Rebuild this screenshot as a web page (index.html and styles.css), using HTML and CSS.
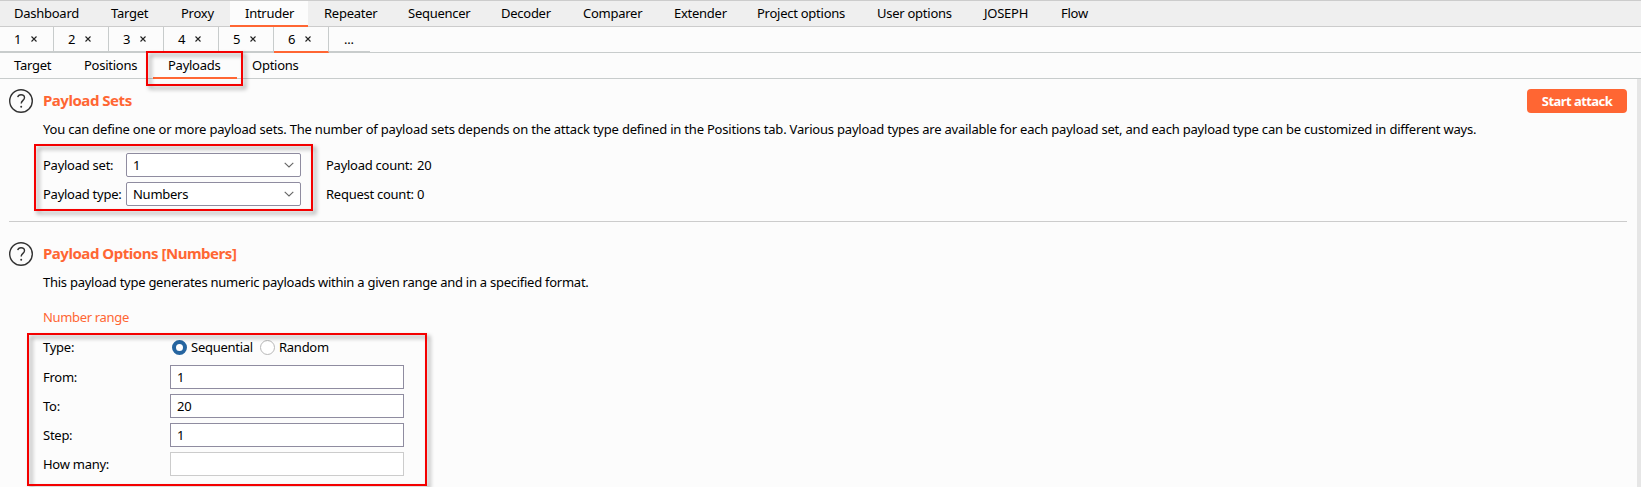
FILE: index.html
```html
<!DOCTYPE html>
<html lang="en">
<head>
<meta charset="utf-8">
<title>Intruder</title>
<link rel="stylesheet" href="styles.css">
</head>
<body>
<nav class="main-tabs">
<span class="t-dash">Dashboard</span><span>Target</span><span>Proxy</span><span class="active">Intruder</span><span>Repeater</span><span>Sequencer</span><span>Decoder</span><span>Comparer</span><span>Extender</span><span>Project options</span><span>User options</span><span>JOSEPH</span><span>Flow</span>
</nav>
<nav class="num-tabs">
<span>1<svg class="x" viewBox="0 0 6 6"><path d="M.5 .5l5 5M5.5 .5l-5 5"/></svg></span>
<span>2<svg class="x" viewBox="0 0 6 6"><path d="M.5 .5l5 5M5.5 .5l-5 5"/></svg></span>
<span>3<svg class="x" viewBox="0 0 6 6"><path d="M.5 .5l5 5M5.5 .5l-5 5"/></svg></span>
<span>4<svg class="x" viewBox="0 0 6 6"><path d="M.5 .5l5 5M5.5 .5l-5 5"/></svg></span>
<span>5<svg class="x" viewBox="0 0 6 6"><path d="M.5 .5l5 5M5.5 .5l-5 5"/></svg></span>
<span class="active">6<svg class="x" viewBox="0 0 6 6"><path d="M.5 .5l5 5M5.5 .5l-5 5"/></svg></span>
<span class="more">...</span>
</nav>
<nav class="sub-tabs"><span>Target</span><span>Positions</span><span class="active">Payloads</span><span>Options</span></nav>
<main class="panel">
<div class="content">
<section class="sets">
<header class="head">
<svg class="help" viewBox="0 0 24 24"><circle cx="12" cy="12" r="11.3"/><path class="hook" d="M8.7 8.2C9.1 6.6 10.4 5.8 12 5.8C14 5.8 15.5 6.9 15.5 8.7C15.5 11.3 12.2 11.5 12.2 14.6"/><circle class="dot" cx="12.2" cy="17.8" r="1"/></svg>
<h2>Payload Sets</h2>
<button class="attack">Start attack</button>
</header>
<p class="desc long">You can define one or more payload sets. The number of payload sets depends on the attack type defined in the Positions tab. Various payload types are available for each payload set, and each payload type can be customized in different ways.</p>
<div class="set-grid">
<span>Payload set:</span><div class="select"><span>1</span><svg viewBox="0 0 10 6"><path d="M.7 .8L5 5L9.3 .8"/></svg></div><span class="count">Payload count:</span><span>20</span>
<span>Payload type:</span><div class="select"><span>Numbers</span><svg viewBox="0 0 10 6"><path d="M.7 .8L5 5L9.3 .8"/></svg></div><span class="count">Request count:</span><span>0</span>
</div>
</section>
<section class="options">
<header class="head">
<svg class="help" viewBox="0 0 24 24"><circle cx="12" cy="12" r="11.3"/><path class="hook" d="M8.7 8.2C9.1 6.6 10.4 5.8 12 5.8C14 5.8 15.5 6.9 15.5 8.7C15.5 11.3 12.2 11.5 12.2 14.6"/><circle class="dot" cx="12.2" cy="17.8" r="1"/></svg>
<h2>Payload Options [Numbers]</h2>
</header>
<p class="desc">This payload type generates numeric payloads within a given range and in a specified format.</p>
<h3>Number range</h3>
<div class="form">
<span class="type">Type:</span><div class="radios"><i class="radio on"></i><span class="seq">Sequential</span><i class="radio"></i><span>Random</span></div>
<span>From:</span><div class="field">1</div>
<span>To:</span><div class="field">20</div>
<span>Step:</span><div class="field">1</div>
<span>How many:</span><div class="field off"></div>
</div>
</section>
</div>
<div class="scroll"></div>
</main>
<div class="mark mark-tab"></div>
<div class="mark mark-sets"></div>
<div class="mark mark-range"></div>
</body>
</html>
```
FILE: styles.css
```css
*{box-sizing:border-box}
body{margin:0;width:1641px;height:487px;overflow:hidden;position:relative;background:#fcfcfc;color:#000;font:13px/18px "Noto Sans","Open Sans",sans-serif;letter-spacing:-.26px;white-space:nowrap}
.main-tabs{display:grid;grid-template-columns:95px 70px 65px 78px 84px 93px 82px 91px 83px 120px 107px 77px 60px;height:27px;background:#efefef;border-top:1px solid #ccc;border-bottom:1px solid #ccc}
.main-tabs span{display:flex;align-items:center;height:26px;padding:0 0 2px 16px}
.main-tabs .t-dash{padding-left:14px}
.main-tabs .active{background:#fcfcfc;border-bottom:2px solid #ff6633;padding:0 0 0 15px}
.num-tabs{display:flex;height:26px;border-bottom:1px solid #c8cccc}
.num-tabs span{display:flex;align-items:center;width:55px;height:26px;padding-left:14px;gap:10px;border-right:1px solid #c8cccc;border-bottom:2px solid #c8cccc}
.num-tabs span:first-child{width:54px}
.num-tabs .active{border-bottom-color:#ff6633}
.num-tabs .more{width:41px;border-right:0;padding-left:15px}
.x{width:6px;height:6px}
.x path{fill:none;stroke:#222;stroke-width:1.1}
.sub-tabs{display:flex;height:26px;border-bottom:1px solid #c8cccc}
.sub-tabs span{display:flex;align-items:center;width:84px;height:26px;padding:0 0 2px 15px}
.sub-tabs span:first-child{width:69px;padding-left:14px}
.sub-tabs .active{border-bottom:2px solid #ff6633;padding-bottom:0}
.panel{display:flex;height:408px}
.content{width:1637px;padding:10px 10px 0 9px}
.scroll{width:4px;background:#e6e6e6}
.sets{height:133px;border-bottom:1px solid #ccc}
.options{padding-top:20px}
.head{display:flex;align-items:center;height:24px}
.help{width:24px;height:24px;margin-right:10px}
.help circle,.hook{fill:none;stroke:#333;stroke-width:1.4}
.help .dot{fill:#333;stroke:none}
h2{margin:0;padding-bottom:2px;font-size:15px;line-height:20px;color:#ff6633;font-weight:700;letter-spacing:-.47px}
.attack{margin-left:auto;width:100px;height:24px;padding:0;border:0;border-radius:4px;background:#ff6633;color:#fff;font:700 13px/18px "Noto Sans",sans-serif;letter-spacing:-.55px}
.desc{margin:7px 0 0 34px}
.long{letter-spacing:-.204px}
.set-grid{display:grid;grid-template-columns:83px 175px 116px auto;grid-template-rows:24px 24px;row-gap:5px;align-items:center;margin:15px 0 0 34px}
.select{display:flex;align-items:center;justify-content:space-between;height:24px;padding:0 6px;border:1px solid #8f8ca0;border-radius:2px;background:#fff}
.select svg{width:10px;height:6px}
.select path{fill:none;stroke:#666;stroke-width:1.1}
.count{padding-left:25px}
h3{margin:17px 0 0 34px;font-size:13px;line-height:18px;font-weight:400;letter-spacing:-.33px;color:#ff6633}
.form{display:grid;grid-template-columns:127px 234px;grid-template-rows:22px 24px 24px 24px 24px;row-gap:5px;align-items:center;margin:12px 0 0 34px}
.type,.radios{align-self:start;height:18px}
.radios{display:flex;align-items:center;padding-left:2px}
.radio{width:15px;height:15px;border:1px solid #b8b8b8;border-radius:50%;background:#fff;margin-right:4px}
.radio.on{border:4px solid #2665a0}
.seq{width:69px}
.field{height:24px;padding:2px 6px;border:1px solid #8f8ca0;background:#fff}
.off{border-color:#ccc}
.mark{position:absolute;border:2px solid #f40000;filter:drop-shadow(3px 3px 2px rgba(0,0,0,.4))}
.mark-tab{left:146px;top:51px;width:97px;height:35px}
.mark-sets{left:34px;top:144px;width:279px;height:67px}
.mark-range{left:27px;top:333px;width:400px;height:153px}
```
